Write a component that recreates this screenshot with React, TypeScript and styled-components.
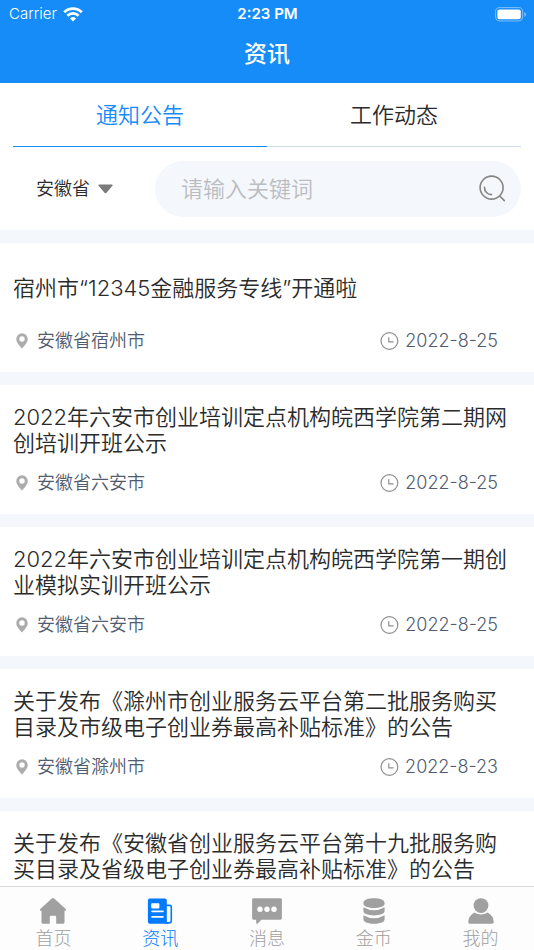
import React, { useState } from 'react';
import styled, { createGlobalStyle } from 'styled-components';

const GlobalStyle = createGlobalStyle`
  *, *::before, *::after { box-sizing: border-box; }
  body {
    margin: 0;
    background: #f4f7fb;
    color: #2b2b2b;
    font-family: Inter, "Noto Sans CJK SC", sans-serif;
    font-weight: 350;
  }
  button, input, select { font: inherit; color: inherit; border: 0; margin: 0; padding: 0; background: none; }
  svg { display: block; flex: none; }
`;

const Page = styled.div`
  height: 100vh;
  display: flex;
  flex-direction: column;
  overflow: hidden;
`;

const Header = styled.header`
  flex: none;
  background: #168cf8;
  color: #fff;
`;

const StatusBar = styled.div`
  display: grid;
  grid-template-columns: 1fr auto 1fr;
  align-items: center;
  height: 28px;
  padding: 0 8px 0 9px;
  font-size: 15px;
  line-height: 20px;
`;

const Carrier = styled.span`
  display: flex;
  align-items: center;
  gap: 6px;
`;

const Clock = styled.time`
  font-weight: 600;
`;

const BatterySlot = styled.span`
  justify-self: end;
`;

const PageTitle = styled.h1`
  margin: 0;
  height: 55px;
  padding-top: 9px;
  font-size: 23px;
  line-height: 34px;
  font-weight: 500;
  text-align: center;
`;

const Filters = styled.section`
  flex: none;
  padding: 0 13px 13px;
  background: #fff;
`;

const Tabs = styled.div`
  display: flex;
`;

const Tab = styled.button<{ $active: boolean }>`
  flex: 1;
  height: 64px;
  border-bottom: 1px solid ${p => (p.$active ? '#168cf8' : '#cfdaeb')};
  color: ${p => (p.$active ? '#168cf8' : '#2b2b2b')};
  font-size: 22px;
  line-height: 32px;
  cursor: pointer;
`;

const SearchRow = styled.form`
  display: flex;
  align-items: center;
  padding-top: 14px;
`;

const Region = styled.label`
  flex: 0 0 142px;
  display: flex;
  align-items: center;
  gap: 7px;
  padding-left: 23px;
`;

const RegionSelect = styled.select`
  appearance: none;
  width: 55px;
  font-size: 18px;
  line-height: 26px;
  cursor: pointer;
`;

const SearchBox = styled.div`
  flex: 1;
  min-width: 0;
  display: flex;
  align-items: center;
  height: 56px;
  padding: 0 14px 0 26px;
  border-radius: 28px;
  background: #f4f7fb;
`;

const SearchInput = styled.input`
  flex: 1;
  min-width: 0;
  font-size: 22px;
  line-height: 32px;
  outline: 0;
  &::placeholder { color: #bbbdc0; opacity: 1; }
`;

const IconButton = styled.button`
  cursor: pointer;
`;

const NewsList = styled.main`
  flex: 1;
  min-height: 0;
  overflow: hidden;
  display: flex;
  flex-direction: column;
  gap: 13px;
  padding-top: 13px;
`;

const Card = styled.article`
  flex: none;
  padding: 19px 18px 18px 13px;
  background: #fff;
`;

const CardTitle = styled.h2`
  display: flex;
  align-items: center;
  min-height: 52px;
  margin: 0 0 14px;
  font-size: 22px;
  line-height: 26px;
  font-weight: inherit;
`;

const Meta = styled.div`
  display: flex;
  justify-content: space-between;
  padding: 0 18px 0 3px;
  color: #515c70;
  font-size: 18px;
  line-height: 26px;
`;

const MetaItem = styled.span<{ $gap: number }>`
  display: flex;
  align-items: center;
  gap: ${p => p.$gap}px;
`;

const TabBar = styled.nav`
  flex: none;
  display: flex;
  height: 64px;
  border-top: 1px solid #d9d9da;
  background: #fdfdfd;
  font-weight: 300;
`;

const TabLink = styled.a<{ $active: boolean }>`
  flex: 1;
  display: flex;
  flex-direction: column;
  align-items: center;
  gap: 2px;
  padding-top: 11px;
  color: ${p => (p.$active ? '#007aff' : '#a0a0a0')};
  font-size: 18px;
  line-height: 26px;
  text-decoration: none;
`;

const WifiIcon = () => (
  <svg width="20" height="15" viewBox="0 0 20 15" fill="none" stroke="#fff" strokeWidth="2.8" aria-hidden="true">
    <path d="M1.2 5.2a12.6 12.6 0 0 1 17.6 0" />
    <path d="M4.4 8.8a7.9 7.9 0 0 1 11.2 0" />
    <path d="M10 14.4 7 11.4a4.4 4.4 0 0 1 6 0Z" fill="#fff" stroke="none" />
  </svg>
);

const BatteryIcon = () => (
  <svg width="31" height="15" viewBox="0 0 31 15" aria-label="电量">
    <rect x=".6" y=".6" width="27" height="13.4" rx="4" fill="none" stroke="#fff" strokeOpacity=".45" />
    <rect x="2.4" y="2.4" width="23.4" height="9.8" rx="2.2" fill="#fff" />
    <path d="M29.3 5v4.8q1.6-.8 1.6-2.4T29.3 5" fill="#fff" fillOpacity=".5" />
  </svg>
);

const ArrowIcon = () => (
  <svg width="15" height="10" viewBox="0 0 15 10" aria-hidden="true">
    <path d="M1.2.4h12.6q1.4.1.6 1.3L8.5 8.8q-1 1-2 0L.6 1.7Q-.2.5 1.2.4Z" fill="#7b7b7b" />
  </svg>
);

const SearchIcon = () => (
  <svg width="28" height="28" viewBox="0 0 28 28" fill="none" stroke="#858585" strokeWidth="1.6" strokeLinecap="round" aria-hidden="true">
    <circle cx="12.6" cy="12.6" r="11.5" />
    <path d="M20.6 20.8 25.3 25.6M5.5 12.4a7 7 0 0 0 7 7.2" />
  </svg>
);

const PinIcon = () => (
  <svg width="12" height="16" viewBox="0 0 12 16" aria-hidden="true">
    <path fillRule="evenodd" d="M6 .3a5.7 5.7 0 0 1 5.7 5.9C11.7 9.4 8.5 12.6 6 15.6 3.5 12.6.3 9.4.3 6.2A5.7 5.7 0 0 1 6 .3Zm0 3a2.7 2.7 0 1 0 0 5.4 2.7 2.7 0 0 0 0-5.4Z" fill="#acacac" />
  </svg>
);

const TimeIcon = () => (
  <svg width="20" height="18" viewBox="0 0 20 18" fill="none" stroke="#8f8f8f" strokeWidth="1.2" aria-hidden="true">
    <circle cx="9.4" cy="9" r="8.4" />
    <path d="M8.8 5.2v4.6h4.8" />
  </svg>
);

const HomeIcon = () => (
  <svg width="28" height="26" viewBox="0 0 28 26" fill="currentColor" aria-hidden="true">
    <path d="M12.8.6q1.2-1 2.4 0L26.7 11q1 1.4-.5 1.7H25.5V24.2q0 1.6-1.6 1.6H17.2V19q0-1.2-1.2-1.2h-4q-1.2 0-1.2 1.2v6.8H4.1q-1.6 0-1.6-1.6V12.7H1.8Q.3 12.4 1.3 11Z" />
  </svg>
);

const NewsIcon = () => (
  <svg width="26" height="26" viewBox="0 0 26 26" aria-hidden="true">
    <path d="M18 7.4h4.6q1.7 0 1.7 1.7v13.6q0 2.2-2.2 2.2H18" fill="none" stroke="currentColor" strokeWidth="1.6" />
    <path d="M2.8.4h15.1q1.9 0 1.9 1.9v20.3q0 1.8 1.5 3.1H2.8q-1.9 0-1.9-1.9V2.3Q.9.4 2.8.4Z" fill="currentColor" />
    <path d="M5 6h6.6v3.6H5zM5 13.4h11M5 18.9h11" fill="#fff" stroke="#fff" strokeWidth="1.6" strokeLinecap="round" strokeLinejoin="round" />
  </svg>
);

const MessageIcon = () => (
  <svg width="30" height="26" viewBox="0 0 30 26" aria-hidden="true">
    <path d="M1.5.3h27q1.4 0 1.4 1.4v18.6q0 1.4-1.4 1.4H9.4l-3.7 3.8q-1.3.7-1.5-.6v-3.2H1.5Q.1 21.7.1 20.3V1.7Q.1.3 1.5.3Z" fill="currentColor" />
    <g fill="#fff"><circle cx="8" cy="11.3" r="2.7" /><circle cx="15" cy="11.3" r="2.7" /><circle cx="22" cy="11.3" r="2.7" /></g>
  </svg>
);

const CoinsIcon = () => (
  <svg width="22" height="26" viewBox="0 0 22 26" fill="currentColor" aria-hidden="true">
    <path d="M.4 4.7C.4-1.2 21.6-1.2 21.6 4.7v1c0 5.6-21.2 5.6-21.2 0Z" />
    <path d="M.4 9.2q10.6 6 21.2 0v3.9c0 5.8-21.2 5.8-21.2 0Z" />
    <path d="M.4 17.3q10.6 6 21.2 0v4c0 6-21.2 6-21.2 0Z" />
  </svg>
);

const UserIcon = () => (
  <svg width="26" height="26" viewBox="0 0 26 26" fill="currentColor" aria-hidden="true">
    <circle cx="13" cy="7.6" r="7.4" />
    <path d="M6.3 14.4q6.7 4.2 13.4 0 5.9 3.5 6.1 9.5 0 1.9-2 1.9H2.2q-2 0-2-1.9.2-6 6.1-9.5Z" />
  </svg>
);

const TABS = ['通知公告', '工作动态'];

interface NewsItem {
  title: string;
  place?: string;
  date?: string;
}

const NEWS: NewsItem[] = [
  { title: '宿州市“12345金融服务专线”开通啦', place: '安徽省宿州市', date: '2022-8-25' },
  { title: '2022年六安市创业培训定点机构皖西学院第二期网创培训开班公示', place: '安徽省六安市', date: '2022-8-25' },
  { title: '2022年六安市创业培训定点机构皖西学院第一期创业模拟实训开班公示', place: '安徽省六安市', date: '2022-8-25' },
  { title: '关于发布《滁州市创业服务云平台第二批服务购买目录及市级电子创业券最高补贴标准》的公告', place: '安徽省滁州市', date: '2022-8-23' },
  { title: '关于发布《安徽省创业服务云平台第十九批服务购买目录及省级电子创业券最高补贴标准》的公告' },
];

const NAV = [
  { label: '首页', Icon: HomeIcon },
  { label: '资讯', Icon: NewsIcon },
  { label: '消息', Icon: MessageIcon },
  { label: '金币', Icon: CoinsIcon },
  { label: '我的', Icon: UserIcon },
];

export default function App() {
  const [tab, setTab] = useState(0);
  return (
    <Page lang="zh-CN">
      <GlobalStyle />
      <Header>
        <StatusBar>
          <Carrier>Carrier<WifiIcon /></Carrier>
          <Clock>2:23 PM</Clock>
          <BatterySlot><BatteryIcon /></BatterySlot>
        </StatusBar>
        <PageTitle>资讯</PageTitle>
      </Header>
      <Filters>
        <Tabs role="tablist">
          {TABS.map((name, i) => (
            <Tab key={name} type="button" role="tab" aria-selected={tab === i} $active={tab === i} onClick={() => setTab(i)}>
              {name}
            </Tab>
          ))}
        </Tabs>
        <SearchRow onSubmit={e => e.preventDefault()}>
          <Region>
            <RegionSelect aria-label="地区"><option>安徽省</option></RegionSelect>
            <ArrowIcon />
          </Region>
          <SearchBox>
            <SearchInput type="text" aria-label="关键词" placeholder="请输入关键词" />
            <IconButton type="submit" aria-label="搜索"><SearchIcon /></IconButton>
          </SearchBox>
        </SearchRow>
      </Filters>
      <NewsList>
        {NEWS.map(item => (
          <Card key={item.title}>
            <CardTitle>{item.title}</CardTitle>
            {item.place && (
              <Meta>
                <MetaItem $gap={9}><PinIcon />{item.place}</MetaItem>
                <MetaItem $gap={5}><TimeIcon /><time>{item.date}</time></MetaItem>
              </Meta>
            )}
          </Card>
        ))}
      </NewsList>
      <TabBar>
        {NAV.map(({ label, Icon }, i) => (
          <TabLink key={label} href="#" $active={i === 1} aria-current={i === 1 ? 'page' : undefined}>
            <Icon />
            {label}
          </TabLink>
        ))}
      </TabBar>
    </Page>
  );
}
